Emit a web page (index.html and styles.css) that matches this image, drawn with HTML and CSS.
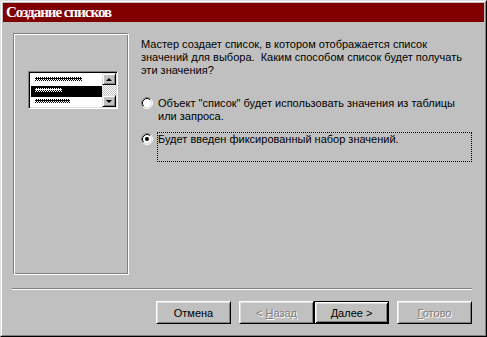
FILE: index.html
```html
<!DOCTYPE html>
<html lang="ru">
<head>
<meta charset="UTF-8" />
<title>Создание списков</title>
<link rel="stylesheet" href="styles.css">
</head>
<body>

<div class="window">
  <div class="frame">
    <div class="titlebar">Создание списков</div>

    <div class="content">
      <!-- picture of a list box -->
      <div class="panel">
        <div class="listbox">
          <div class="items">
            <div class="item"><span class="dots w47"></span></div>
            <div class="item selected"><span class="dots w27"></span></div>
            <div class="item"><span class="dots w35"></span></div>
          </div>
          <div class="scrollbar">
            <div class="sbtn"><span class="arrow up"></span></div>
            <div class="track"></div>
            <div class="sbtn"><span class="arrow down"></span></div>
          </div>
        </div>
      </div>

      <div class="options">
        <p class="intro">Мастер создает список, в котором отображается список<br>значений для выбора.&nbsp; Каким способом список будет получать<br>эти значения?</p>

        <div class="radio-row first">
          <svg class="radio" width="12" height="12" viewBox="0 0 12 12">
            <circle cx="6" cy="6" r="5" fill="#fff"/>
            <path d="M2.11 9.89 A5.5 5.5 0 0 1 9.89 2.11" fill="none" stroke="#808080"/>
            <path d="M9.89 2.11 A5.5 5.5 0 0 1 2.11 9.89" fill="none" stroke="#fff"/>
            <path d="M2.82 9.18 A4.5 4.5 0 0 1 9.18 2.82" fill="none" stroke="#000"/>
            <path d="M9.18 2.82 A4.5 4.5 0 0 1 2.82 9.18" fill="none" stroke="#dfdfdf"/>
          </svg>
          <div class="label">Объект "список" будет использовать значения из таблицы<br>или запроса.</div>
        </div>

        <div class="radio-row">
          <svg class="radio" width="12" height="12" viewBox="0 0 12 12">
            <circle cx="6" cy="6" r="5" fill="#fff"/>
            <path d="M2.11 9.89 A5.5 5.5 0 0 1 9.89 2.11" fill="none" stroke="#808080"/>
            <path d="M9.89 2.11 A5.5 5.5 0 0 1 2.11 9.89" fill="none" stroke="#fff"/>
            <path d="M2.82 9.18 A4.5 4.5 0 0 1 9.18 2.82" fill="none" stroke="#000"/>
            <path d="M9.18 2.82 A4.5 4.5 0 0 1 2.82 9.18" fill="none" stroke="#dfdfdf"/>
            <circle cx="6" cy="6" r="2" fill="#000"/>
          </svg>
          <div class="label focused">Будет введен фиксированный набор значений.</div>
        </div>
      </div>
    </div>

    <div class="separator"></div>

    <div class="buttons">
      <button class="btn cancel">Отмена</button>
      <button class="btn" disabled>&lt; <u>Н</u>азад</button>
      <button class="btn default"><u>Д</u>алее &gt;</button>
      <button class="btn finish" disabled><u>Г</u>отово</button>
    </div>
  </div>
</div>

</body>
</html>
```

FILE: styles.css
```css
body {
  margin: 0;
  background: #c0c0c0;
  font-family: 'Liberation Sans', Arial, sans-serif;
  font-size: 11px;
  color: #000;
}
.window {
  width: 487px;
  height: 337px;
  box-sizing: border-box;
  border: 1px solid;
  border-color: #dfdfdf #000 #000 #dfdfdf;
}
.frame {
  height: 100%;
  box-sizing: border-box;
  border: 1px solid;
  border-color: #fff #808080 #808080 #fff;
  padding: 1px;
  display: flex;
  flex-direction: column;
}
.titlebar {
  height: 19px;
  line-height: 19px;
  background: #800000;
  color: #fff;
  padding-left: 3px;
  font-family: 'Liberation Serif', 'Times New Roman', serif;
  font-weight: bold;
  font-size: 15px;
  letter-spacing: -1px;
}
.content {
  display: flex;
  padding: 11px 12px 0 10px;
}
.panel {
  width: 116px;
  height: 242px;
  box-sizing: border-box;
  border: 1px solid;
  border-color: #808080 #fff #fff #808080;
  box-shadow: inset 1px 1px #fff, inset -1px -1px #808080;
  padding: 37px 0 0 14px;
}
.listbox {
  width: 90px;
  height: 38px;
  box-sizing: border-box;
  border: 1px solid;
  border-color: #808080 #fff #fff #808080;
  box-shadow: inset 1px 1px #000, inset -1px -1px #dfdfdf;
  padding: 1px;
  display: flex;
  background: #fff;
}
.items {
  flex: 1;
  padding: 2px 0 0 1px;
  overflow: hidden;
}
.item {
  height: 11px;
  padding: 2px 0 0 4px;
  box-sizing: border-box;
}
.item.selected {
  background: #000;
}
.dots {
  display: block;
  height: 4px;
  background:
    linear-gradient(#000, #000) 0 1px / 100% 1px no-repeat,
    repeating-conic-gradient(#000 0 25%, #fff 0 50%) 0 0 / 2px 2px;
}
.selected .dots {
  background:
    linear-gradient(#fff, #fff) 0 1px / 100% 1px no-repeat,
    repeating-conic-gradient(#fff 0 25%, #000 0 50%) 0 0 / 2px 2px;
}
.w47 { width: 47px; }
.w27 { width: 27px; }
.w35 { width: 35px; }
.scrollbar {
  width: 14px;
  display: flex;
  flex-direction: column;
}
.sbtn {
  height: 12px;
  box-sizing: border-box;
  background: #c0c0c0;
  border: 1px solid;
  border-color: #dfdfdf #000 #000 #dfdfdf;
  box-shadow: inset 1px 1px #fff, inset -1px -1px #808080;
  display: flex;
  align-items: center;
  justify-content: center;
}
.track {
  flex: 1;
  background: repeating-conic-gradient(#c0c0c0 0 25%, #fff 0 50%) 0 0 / 2px 2px;
}
.arrow {
  width: 0;
  height: 0;
  border-left: 3px solid transparent;
  border-right: 3px solid transparent;
}
.arrow.up {
  border-bottom: 3px solid #000;
}
.arrow.down {
  border-top: 3px solid #000;
}
.options {
  flex: 1;
  margin-left: 12px;
}
.intro {
  margin: 5px 0 0;
  line-height: 13px;
  white-space: nowrap;
}
.radio-row {
  display: flex;
  align-items: flex-start;
  margin-top: 9px;
}
.radio-row.first {
  margin-top: 20px;
}
.radio {
  flex: none;
  margin-right: 4px;
}
.label {
  flex: 1;
  line-height: 13px;
  border: 1px solid transparent;
  margin-top: -1px;
  white-space: nowrap;
}
.label.focused {
  height: 28px;
  border: 1px dotted #000;
}
.separator {
  height: 0;
  border-top: 1px solid #808080;
  border-bottom: 1px solid #fff;
  margin: 13px 12px 0 9px;
}
.buttons {
  display: flex;
  justify-content: flex-end;
  padding: 11px 12px 0 0;
}
.btn {
  width: 75px;
  height: 23px;
  box-sizing: border-box;
  margin: 0;
  padding: 0;
  background: #c0c0c0;
  font-family: inherit;
  font-size: 11px;
  color: #000;
  border: 1px solid;
  border-color: #fff #000 #000 #fff;
  box-shadow: inset 1px 1px #dfdfdf, inset -1px -1px #808080;
}
.btn.cancel {
  margin-right: 8px;
}
.btn.finish {
  margin-left: 8px;
}
.btn.default {
  border: 1px solid #000;
  box-shadow: inset 1px 1px #fff, inset -1px -1px #000, inset 2px 2px #dfdfdf, inset -2px -2px #808080;
}
.btn:disabled {
  color: #808080;
  text-shadow: 1px 1px #fff;
}
```
